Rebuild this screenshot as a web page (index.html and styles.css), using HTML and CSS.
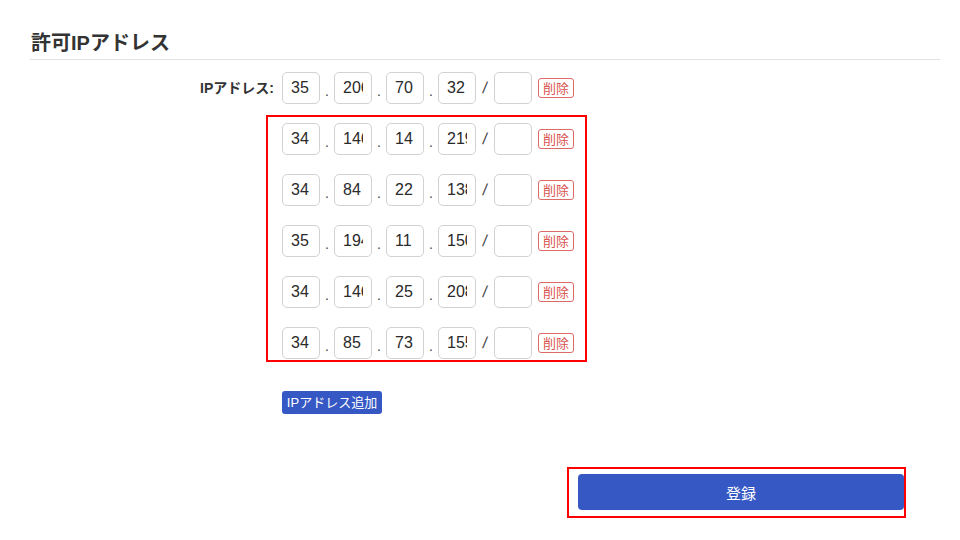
FILE: index.html
```html
<!DOCTYPE html>
<html lang="ja">
<head>
<meta charset="utf-8">
<title>許可IPアドレス</title>
<link rel="stylesheet" href="styles.css">
</head>
<body>
<div class="page">
  <h2 class="title">許可IPアドレス</h2>
  <div class="form">
    <div class="label">IPアドレス:</div>
    <div class="fields">
      <div class="ip-row">
        <input class="oct" value="35"><span class="dot">.</span><input class="oct" value="206"><span class="dot">.</span><input class="oct" value="70"><span class="dot">.</span><input class="oct" value="32"><span class="slash">/</span><input class="oct" value=""><button class="del">削除</button>
      </div>
      <div class="highlight">
        <div class="ip-row">
          <input class="oct" value="34"><span class="dot">.</span><input class="oct" value="146"><span class="dot">.</span><input class="oct" value="14"><span class="dot">.</span><input class="oct" value="219"><span class="slash">/</span><input class="oct" value=""><button class="del">削除</button>
        </div>
        <div class="ip-row">
          <input class="oct" value="34"><span class="dot">.</span><input class="oct" value="84"><span class="dot">.</span><input class="oct" value="22"><span class="dot">.</span><input class="oct" value="138"><span class="slash">/</span><input class="oct" value=""><button class="del">削除</button>
        </div>
        <div class="ip-row">
          <input class="oct" value="35"><span class="dot">.</span><input class="oct" value="194"><span class="dot">.</span><input class="oct" value="11"><span class="dot">.</span><input class="oct" value="150"><span class="slash">/</span><input class="oct" value=""><button class="del">削除</button>
        </div>
        <div class="ip-row">
          <input class="oct" value="34"><span class="dot">.</span><input class="oct" value="146"><span class="dot">.</span><input class="oct" value="25"><span class="dot">.</span><input class="oct" value="208"><span class="slash">/</span><input class="oct" value=""><button class="del">削除</button>
        </div>
        <div class="ip-row">
          <input class="oct" value="34"><span class="dot">.</span><input class="oct" value="85"><span class="dot">.</span><input class="oct" value="73"><span class="dot">.</span><input class="oct" value="155"><span class="slash">/</span><input class="oct" value=""><button class="del">削除</button>
        </div>
      </div>
      <button class="add">IPアドレス追加</button>
    </div>
  </div>
  <div class="submit-area">
    <div class="submit-wrap">
      <button class="submit">登録</button>
    </div>
  </div>
</div>
</body>
</html>
```
FILE: styles.css
```css
html, body {
  margin: 0;
  padding: 0;
  background: #fff;
}
body {
  font-family: "Liberation Sans", "Noto Sans CJK JP", sans-serif;
  color: #333;
}
.page {
  width: 910px;
  padding: 29px 20px 0 30px;
}
.title {
  margin: 0;
  font-size: 20px;
  line-height: 28px;
  font-weight: bold;
  color: #333;
  padding: 0 0 2px 1px;
  border-bottom: 1px solid #e3e3e3;
}
.form {
  display: flex;
  margin-top: 12px;
}
.label {
  width: 244px;
  text-align: right;
  font-size: 14px;
  font-weight: bold;
  line-height: 32px;
  height: 32px;
  margin-right: 8px;
}
.fields {
  display: flex;
  flex-direction: column;
  align-items: flex-start;
}
.ip-row {
  display: flex;
  align-items: center;
  height: 32px;
}
.oct {
  box-sizing: border-box;
  width: 38px;
  height: 32px;
  border: 1px solid #d2d2d2;
  border-radius: 5px;
  padding: 0 8px 0 8px;
  font-family: "Liberation Sans", "Noto Sans CJK JP", sans-serif;
  font-size: 16px;
  color: #2a2a2a;
  background: #fff;
  outline: none;
}
.dot {
  width: 14px;
  text-align: center;
  font-size: 14px;
  color: #444;
  padding-top: 6px;
}
.slash {
  width: 18px;
  text-align: center;
  font-size: 16px;
  color: #444;
  transform: skewX(-8deg);
}
.del {
  box-sizing: border-box;
  margin-left: 6px;
  width: 36px;
  height: 20px;
  padding: 0;
  border: 1px solid #dc6b68;
  border-radius: 3px;
  background: #fff;
  color: #d9534f;
  font-family: "Noto Sans CJK JP", sans-serif;
  font-size: 13px;
  line-height: 18px;
}
.highlight {
  display: flex;
  flex-direction: column;
  gap: 19px;
  margin: 11px 0 0 -16px;
  padding: 6px 11px 1px 14px;
  border: 2px solid #f00;
}
.add {
  margin-top: 29px;
  width: 100px;
  height: 23px;
  padding: 0;
  border: none;
  border-radius: 3px;
  background: #3558c4;
  color: #fff;
  font-family: "Liberation Sans", "Noto Sans CJK JP", sans-serif;
  font-size: 13px;
  line-height: 23px;
}
.submit-area {
  display: flex;
  margin-top: 53px;
  padding-left: 537px;
}
.submit-wrap {
  border: 2px solid #f00;
  padding: 5px 0 6px 9px;
}
.submit {
  display: block;
  width: 326px;
  height: 36px;
  border: none;
  border-radius: 4px;
  background: #3558c4;
  color: #fff;
  font-family: "Noto Sans CJK JP", sans-serif;
  font-size: 15px;
}
```
